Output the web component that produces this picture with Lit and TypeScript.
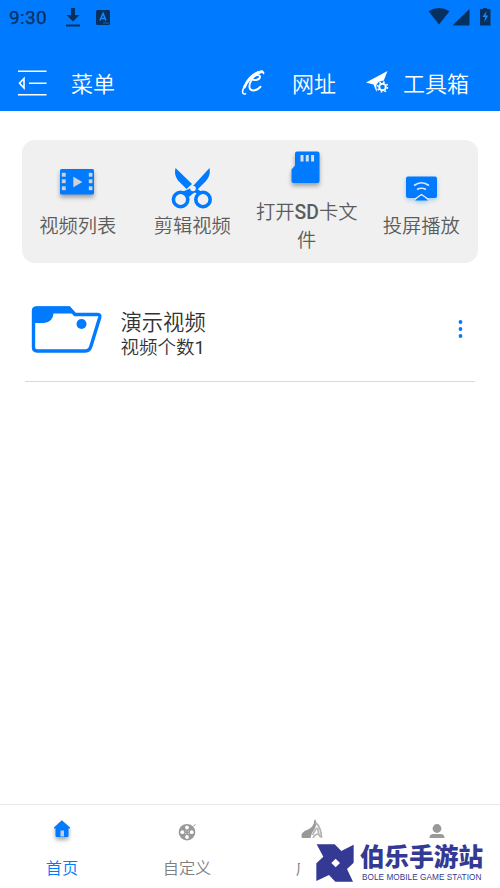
import { LitElement, html, css, svg } from "lit";
import { customElement } from "lit/decorators.js";

const scissors = svg`
  <path d="M7.500 0C6 6 8 10 11 13.500L18.500 21L24 16Z"/>
  <path d="M41.500 0C42.500 6 41 9 38 13L30 21L21 29L15 23.500L22 20.500L26 17Z"/>
  <path d="M13 23L20 23L28 20L35 25L31 27L27 24.500L21 27L17 26Z"/>
  <circle cx="25" cy="20.500" r="2.800" fill="#f0f0f0"/>
  <circle cx="12.600" cy="31.500" r="7.200" fill="#f0f0f0" stroke="#007aff" stroke-width="3.600"/>
  <circle cx="35" cy="31.500" r="7.200" fill="#f0f0f0" stroke="#007aff" stroke-width="3.600"/>`;

@customElement("app-root")
export class AppRoot extends LitElement {
  static styles = css`
    :host {
      display: flex; flex-direction: column; position: relative;
      width: 500px; height: 888px; overflow: hidden; background: #fff;
      font-family: Roboto, "Noto Sans CJK SC", sans-serif; font-weight: 350;
    }
    svg { display: block; flex: none; }
    .header { height: 111px; background: #007aff; color: #fff; flex: none; }
    .status { height: 35px; display: flex; align-items: center; padding: 0 8px 0 9px; box-sizing: border-box; color: #06305f; }
    .time { font-size: 19px; font-weight: 400; line-height: 35px; letter-spacing: .35px; width: 55px; -webkit-text-stroke: .25px; }
    .grow { flex: 1; }
    .bar { height: 76px; display: flex; align-items: center; padding: 20px 0 0 18px; box-sizing: border-box; font-size: 22px; line-height: 32px; }
    .bar span { white-space: nowrap; padding-top: 3px; }
    .menu { width: 170px; margin-left: 24px; }
    .site { width: 74px; margin-left: 27px; }
    .tools { margin-left: 13px; }
    .card { margin: 29px 22px 0; height: 123px; flex: none; border-radius: 13px; background: #f0f0f0; display: grid; grid-template-columns: repeat(4, 114.500px); justify-content: center; }
    .tool { display: flex; flex-direction: column; align-items: center; justify-content: center; color: #5c5c5c; font-size: 19.300px; line-height: 28px; text-align: center; padding: 3px 1px 0 0; }
    .tool span { width: 104px; }
    .lat { font-weight: 500; }
    .shade { filter: drop-shadow(0 3px 2px #0005); }
    .row { margin: 24px 25px 0; height: 95px; box-sizing: border-box; border-bottom: 1px solid #d9d9d9; display: flex; align-items: center; padding: 0 11px 9px 6px; flex: none; }
    .info { margin-left: 17.500px; padding-top: 12px; color: #333; flex: 1; }
    .name { font-size: 21.300px; line-height: 25px; }
    .count { font-size: 18.500px; line-height: 26px; }
    .num { font-weight: 400; }
    .nav { margin-top: auto; height: 84px; box-sizing: border-box; border-top: 1px solid #e8e8e8; display: grid; grid-template-columns: repeat(4, 1fr); padding-top: 11px; flex: none; }
    .tab { display: flex; flex-direction: column; align-items: center; color: #808080; font-size: 16.200px; line-height: 24px; gap: 13px; padding-right: 1px; }
    .active { color: #007aff; }
    .brand { position: absolute; right: 0; bottom: 0; width: 200px; height: 50px; background: #fff; display: flex; padding: 5px 0 0 16px; box-sizing: border-box; color: #343a93; }
    .words { margin-left: 6px; white-space: nowrap; padding-top: 1px; }
    .cn { font-size: 24.600px; line-height: 28px; font-weight: 900; }
    .en { font: 400 8.200px/11px "Liberation Sans", sans-serif; margin-left: 2px; letter-spacing: .06px; }
  `;

  render() {
    return html`
      <div class="header">
        <div class="status">
          <div class="time">9:30</div>
          <svg width="18" height="20" viewBox="0 1 18 20" fill="currentColor"><path d="M7 1h4v7h4.500L9 14.500 2.500 8H7zM2 17.500h14v2H2z"/></svg>
          <svg width="14" height="15" viewBox="0 0 14 15" style="margin-left:14px"><rect width="14" height="15" rx="1.500" fill="#06305f"/><path d="M4 10.500L7 3.500l3 7M5.200 8.500h3.600" fill="none" stroke="#168aff" stroke-width="1.500"/><path d="M7 13h6" stroke="#168aff" stroke-width=".6"/></svg>
          <div class="grow"></div>
          <svg width="64" height="20" viewBox="0 1 64 20" fill="currentColor">
            <path d="M.500 4.200Q11 -2 21.500 4.200L11 17.500zM24.500 18.500L41.500 2v16.500z"/>
            <path d="M55 1h4v1h3.500v16.500h-10.500V2h3z"/>
            <path d="M58.500 4l-4 6h2.700l-.9 5 4-6.500h-2.600z" fill="#168aff"/>
          </svg>
        </div>
        <div class="bar">
          <svg width="29" height="28" viewBox="0 0 29 28" fill="none" stroke="#fff" stroke-width="1.600"><path d="M0 2.300h28.500M11 14.200h17.500M0 25.700h28.500M6 9.500v9.500L1.500 14.200z"/></svg>
          <span class="menu">菜单</span>
          <svg width="24" height="26" viewBox="0 0 24 26" fill="none" stroke="#fff" stroke-linecap="round">
            <path d="M4.500 23.700C.5 25 1 20.500 3.500 16.500C8 8 14 2 20 1.500q3 0 2.500 2" stroke-width="1.600"/>
            <path d="M3.500 17C7 9 13 3 21 1.700" stroke-width="2.800"/>
            <path d="M11 9.700C14 10.500 18.500 10 19 7c.300-3.300-6-2.500-8.500 3C7 16 8 20.500 12.500 20.500q4 0 7-3.800" stroke-width="1.900"/>
          </svg>
          <span class="site">网址</span>
          <svg width="24" height="24" viewBox="0.5 1 24 24" fill="#fff">
            <path d="M22 1L.5 12.500 8 14.500 11 22l.8-5.500 2.500-3.500 4-2.500z"/>
            <circle cx="17" cy="17" r="6.200" fill="#007aff"/>
            <circle cx="17" cy="17" r="3.300" fill="none" stroke="#fff" stroke-width="2"/>
            <circle cx="17" cy="17" r="5" fill="none" stroke="#fff" stroke-width="1.500" stroke-dasharray="1.700 2.227"/>
          </svg>
          <span class="tools">工具箱</span>
        </div>
      </div>

      <div class="card">
        <div class="tool">
          <svg width="48" height="48" viewBox="0 1 48 48"><g class="shade"><rect x="6" y="5" width="34" height="25.500" rx="1.500" fill="#007aff"/><path d="M8 9h3.500v3.500H8zm0 6.500h3.500v3.500H8zm0 7h3.500v3.500H8zM35 9h3.200v3.500H35zm0 6.500h3.200v3.500H35zm0 7h3.200v3.500H35zM19.500 13l8.500 5-8.500 5z" fill="#d0d2d6" stroke="#d0d2d6" stroke-width=".4"/></g></svg>
          <span>视频列表</span>
        </div>
        <div class="tool">
          <svg width="48" height="48" viewBox="0 -3 48 48" fill="#007aff">${scissors}</svg>
          <span>剪辑视频</span>
        </div>
        <div class="tool">
          <svg width="48" height="48" viewBox="0 2.500 48 48"><g class="shade"><path d="M14 3h20.500q2 0 2 2v27.500q0 2-2 2H10.500q-2 0-2-2V21l3.500-4V5q0-2 2-2z" fill="#007aff"/><path d="M17.500 6.500h3v6.500h-3zm5.300 0h3v6.500h-3zm5.300 0h3v6.500h-3z" fill="#dadde2"/></g></svg>
          <span>打开<b class="lat">SD</b>卡文件</span>
        </div>
        <div class="tool">
          <svg width="48" height="48" viewBox="-.5 1 48 48"><g style="filter:drop-shadow(0 2px 2px #007aff55)"><rect x="8.500" y="12.500" width="31" height="21.500" rx="2" fill="#007aff"/><path d="M16.500 21.500q7.500-5.500 15 0M19.500 25.500q4.500-2.500 9 0" fill="none" stroke="#dceaff" stroke-width="1.600"/><path d="M17.500 36.500l6.500-6 6.500 6z" fill="#007aff"/><path d="M17.500 35l6.500-4.500 6.500 4.500" fill="none" stroke="#f0f0f0" stroke-width="1.300"/></g></svg>
          <span>投屏播放</span>
        </div>
      </div>

      <div class="row">
        <svg width="72" height="50" viewBox="0 0 72 50">
          <path d="M6 46q-3.500 0-3.500-3.500V6q0-3 3.500-3h32l6 6.500h23q2.500 0 1.700 3L60 41q-1.500 5-5.500 5z" fill="none" stroke="#007aff" stroke-width="3.400"/>
          <path d="M1 18V6q0-4.500 4.500-4.500H39l5.500 7H22.500q-.5 8.500-9.500 9.500z" fill="#007aff"/>
          <circle cx="50.500" cy="19" r="5" fill="#007aff"/>
        </svg>
        <div class="info"><div class="name">演示视频</div><div class="count">视频个数<span class="num">1</span></div></div>
        <svg width="7" height="20" viewBox="0 2 7 20" fill="#007aff"><circle cx="3.500" cy="4" r="1.900"/><circle cx="3.500" cy="11" r="1.900"/><circle cx="3.500" cy="18" r="1.900"/></svg>
      </div>

      <div class="nav">
        <div class="tab active">
          <svg width="28" height="28" viewBox="0 0 28 28"><g class="shade"><path d="M13.800 4.200L22 11.500v1h-1.500V20q0 1-1 1H8.500q-1 0-1-1v-7.500H6v-1z" fill="#007aff"/><path d="M12.500 14.500H16v6h-3.500z" fill="#c5cbd5"/></g></svg>
          <span>首页</span>
        </div>
        <div class="tab">
          <svg width="28" height="28" viewBox="-.5 0 28 28"><circle cx="13.500" cy="16.200" r="8.300" fill="#999"/><path d="M20 10l2-1.500" stroke="#999"/><g fill="#fff"><circle cx="13.500" cy="11.500" r="1.900"/><circle cx="13.500" cy="21" r="1.900"/><circle cx="8.800" cy="16.200" r="1.900"/><circle cx="18.200" cy="16.200" r="1.900"/><circle cx="12.300" cy="15" r=".5"/><circle cx="14.800" cy="17.500" r=".5"/><circle cx="14.800" cy="15" r=".5"/><circle cx="12.300" cy="17.500" r=".5"/></g></svg>
          <span>自定义</span>
        </div>
        <div class="tab">
          <svg width="28" height="28" viewBox="0 0 28 28"><path d="M4 22C2.500 18 5 15.500 9 14C13 12.500 16.500 9 16 4.500L17.500 3.500Q19 9 16.500 13Q13 17 12.500 22z" fill="#999"/><path d="M17.500 6.500q6 5 6 15.500M14.500 19q5-10 5.500-5t2.500 7M15 22q2-4 5.500-4" fill="none" stroke="#b5b5b5" stroke-width="1.700"/></svg>
          <span>广场</span>
        </div>
        <div class="tab">
          <svg width="28" height="28" viewBox="-.5 0 28 28" fill="#999"><circle cx="13.500" cy="12.500" r="4.400"/><path d="M6 24v-2q0-4 4-4h7q4 0 4 4v2z"/></svg>
        </div>
      </div>

      <div class="brand">
        <svg width="38" height="40" viewBox="109 144 114 120"><path fill="#343a93" fill-rule="evenodd" d="M111 148H165L185 168 222 149V203L202 222 220 260H167L148 240 110 258V205L131 185zM168 191l-13 13 13 13 13-13z"/></svg>
        <div class="words"><div class="cn">伯乐手游站</div><div class="en">BOLE MOBILE GAME STATION</div></div>
      </div>
    `;
  }
}
